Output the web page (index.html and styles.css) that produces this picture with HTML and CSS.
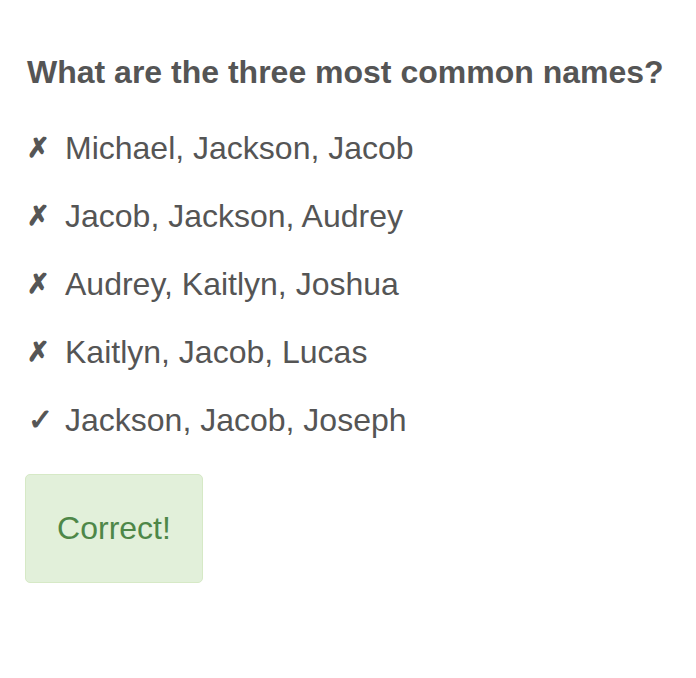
FILE: index.html
```html
<!DOCTYPE html>
<html>
<head>
<meta charset="utf-8">
<link rel="stylesheet" href="styles.css">
</head>
<body>
<div class="quiz">
  <h2 class="question">What are the three most common names?</h2>
  <ul class="answers">
    <li class="answer"><span class="mark">✗</span><span>Michael, Jackson, Jacob</span></li>
    <li class="answer"><span class="mark">✗</span><span>Jacob, Jackson, Audrey</span></li>
    <li class="answer"><span class="mark">✗</span><span>Audrey, Kaitlyn, Joshua</span></li>
    <li class="answer"><span class="mark">✗</span><span>Kaitlyn, Jacob, Lucas</span></li>
    <li class="answer"><span class="mark check">✓</span><span>Jackson, Jacob, Joseph</span></li>
  </ul>
  <div class="result">Correct!</div>
</div>
</body>
</html>
```

FILE: styles.css
```css
html, body {
  margin: 0;
  padding: 0;
  background: #fff;
}
body {
  font-family: "Liberation Sans", Arial, Helvetica, sans-serif;
  color: #555;
}
.quiz {
  padding: 52px 25px 0 25px;
}
.question {
  margin: 0 0 36px 2px;
  font-size: 32px;
  font-weight: bold;
  line-height: 40px;
  color: #555;
  white-space: nowrap;
}
.answers {
  list-style: none;
  margin: 0;
  padding: 0;
  display: flex;
  flex-direction: column;
  gap: 28px;
}
.answer {
  display: flex;
  align-items: center;
  font-size: 32px;
  line-height: 40px;
  margin-left: 2px;
}
.mark {
  display: inline-block;
  width: 38px;
  font-family: "DejaVu Sans", sans-serif;
  font-size: 27px;
  -webkit-text-stroke: 1.2px #555;
}
.mark.check {
  font-size: 30px;
  -webkit-text-stroke: 1px #555;
  padding-left: 1px;
  width: 37px;
}
.result {
  margin-top: 34px;
  width: 178px;
  height: 109px;
  box-sizing: border-box;
  border: 1px solid #d6e9c6;
  border-radius: 5px;
  background: #e2f0da;
  color: #4e8748;
  font-size: 32px;
  display: flex;
  align-items: center;
  justify-content: center;
}
```
